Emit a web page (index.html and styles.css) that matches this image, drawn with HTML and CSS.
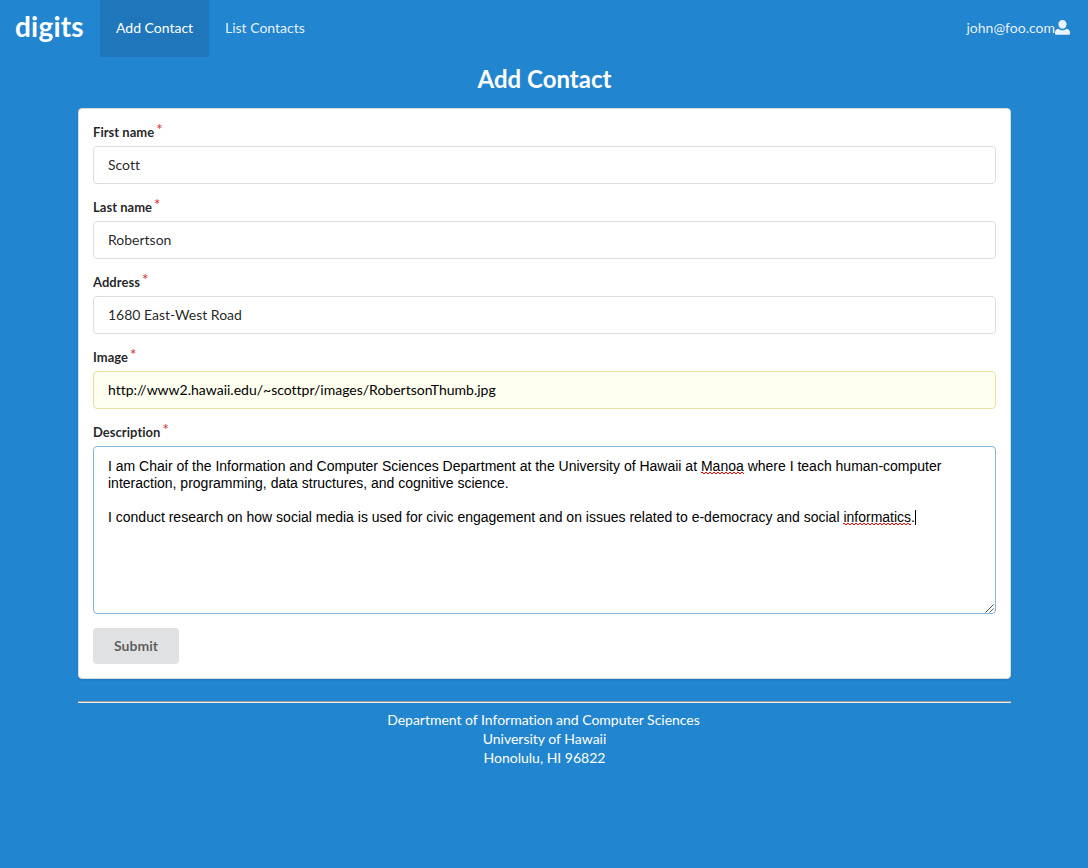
FILE: index.html
```html
<!DOCTYPE html>
<html lang="en">
<head>
<meta charset="utf-8">
<title>digits</title>
<link rel="stylesheet" href="styles.css">
</head>
<body>
<nav class="menu">
  <a class="brand">digits</a>
  <a class="item active">Add Contact</a>
  <a class="item">List Contacts</a>
  <a class="user">john@foo.com<svg class="user-icon" viewBox="0 0 14 14"><path d="M7 0C4.700 0 3.200 1.600 3.200 3.900 3.200 6.300 4.900 8.200 7 8.200s3.800-1.900 3.800-4.300C10.800 1.600 9.300 0 7 0zM3.300 8.100C1 8.600 0 9.700 0 11.600v.9c0 .8.5 1.300 1.300 1.300h11.400c.8 0 1.300-.5 1.300-1.300v-.9c0-1.900-1-3-3.300-3.500C9.700 9.100 8.400 9.500 7 9.500s-2.700-.4-3.700-1.400z"/></svg></a>
</nav>
<main class="container">
  <h2 class="title">Add Contact</h2>
  <form class="segment">
    <div class="field"><label class="label" for="first">First name</label><input class="input" id="first" value="Scott"></div>
    <div class="field"><label class="label" for="last">Last name</label><input class="input" id="last" value="Robertson"></div>
    <div class="field"><label class="label" for="address">Address</label><input class="input" id="address" value="1680 East-West Road"></div>
    <div class="field"><label class="label" for="image">Image</label><input class="input autofilled" id="image" value="http://www2.hawaii.edu/~scottpr/images/RobertsonThumb.jpg"></div>
    <div class="field">
      <span class="label">Description</span>
      <div class="textarea">
        <p class="line">I am Chair of the Information and Computer Sciences Department at the University of Hawaii at <span class="misspelt">Manoa</span> where I teach human-computer interaction, programming, data structures, and cognitive science.</p>
        <p class="line">I conduct research on how social media is used for civic engagement and on issues related to e-democracy and social <span class="misspelt">informatics</span>.<span class="caret"></span></p>
        <svg class="grip" viewBox="0 0 9 9"><path d="M.5 8.500l8-8M4.500 8.500l4-4"/></svg>
      </div>
    </div>
    <button class="submit" type="button">Submit</button>
  </form>
  <footer class="footer">
    <hr class="rule">
    <div class="department">Department of Information and Computer Sciences</div>
    <div>University of Hawaii</div>
    <div>Honolulu, HI 96822</div>
  </footer>
</main>
</body>
</html>
```

FILE: styles.css
```css
* { box-sizing: border-box; }
body {
  margin: 0;
  min-height: 868px;
  background: #2185d0;
  color: #fff;
  font: 14px/20px Lato, sans-serif;
  font-variant-ligatures: none;
}
.menu { display: flex; height: 57px; align-items: stretch; white-space: nowrap; }
.brand {
  width: 100px;
  padding: 8px 0 0 15px;
  font-size: 28px;
  line-height: 36px;
  font-weight: 700;
  letter-spacing: .2px;
}
.item { padding: 18px 16px 0; color: rgba(255,255,255,.9); }
.item.active { width: 109px; background: #1f76bb; color: #fff; }
.user { display: flex; margin-left: auto; padding: 18px 18px 0 0; color: rgba(255,255,255,.9); }
.user-icon { width: 15px; height: 15px; margin: 2px 0 0; fill: currentColor; }
.container { width: 933px; margin: 0 auto 0 78px; }
.title { margin: 0; padding-top: 6px; height: 51px; font-size: 24px; line-height: 31px; text-align: center; }
.segment {
  height: 571px;
  padding: 14px;
  border: 1px solid #d9dcde;
  border-radius: 4px;
  background: #fff;
  box-shadow: 0 1px 2px rgba(34,36,38,.15);
  color: rgba(0,0,0,.87);
}
.field { margin-bottom: 14px; }
.label { display: block; height: 19px; margin-bottom: 4px; font-size: 13px; line-height: 19px; font-weight: 700; letter-spacing: .03px; }
.label::after { content: "*"; margin-left: 2px; color: #db2828; font-size: 15px; font-weight: 400; line-height: 0; vertical-align: 2px; }
.input {
  display: block;
  width: 100%;
  height: 38px;
  padding: 0 14px 2px;
  border: 1px solid #dededf;
  border-radius: 4px;
  background: #fff;
  color: rgba(0,0,0,.87);
  font: 14px Lato, sans-serif;
  font-variant-ligatures: none;
}
.autofilled { border-color: #e5dfa1; background: #fffff0; color: #000; }
.textarea {
  position: relative;
  height: 168px;
  padding: 11px 14px;
  border: 1px solid #85b7d9;
  border-radius: 4px;
  color: #000;
  font: 14px/17px "Liberation Sans", Arial, sans-serif;
}
.line { margin: 0 0 17px; }
.misspelt {
  background:
    repeating-linear-gradient(90deg, transparent 0 2px, #f00 2px 4px) 0 100% / 100% 1px no-repeat,
    repeating-linear-gradient(90deg, #f00 0 2px, transparent 2px 4px) 0 calc(100% - 1px) / 100% 1px no-repeat;
}
.caret { display: inline-block; width: 1px; height: 15px; margin-right: -1px; background: #000; vertical-align: -3px; }
.grip { position: absolute; right: 1px; bottom: 0; width: 9px; height: 9px; fill: none; stroke: #555; stroke-width: 1; }
.submit {
  display: block;
  width: 86px;
  height: 36px;
  padding: 0 0 2px;
  border: 0;
  border-radius: 4px;
  background: #e0e1e2;
  color: rgba(0,0,0,.6);
  font: 700 14px Lato, sans-serif;
}
.footer { padding-top: 22px; line-height: 19px; text-align: center; }
.department { padding-right: 2px; letter-spacing: -.02px; }
.rule { height: 2px; margin: 0 0 7px; border: 0; border-top: 1px solid #9a9a9a; border-bottom: 1px solid #eee; }
```
